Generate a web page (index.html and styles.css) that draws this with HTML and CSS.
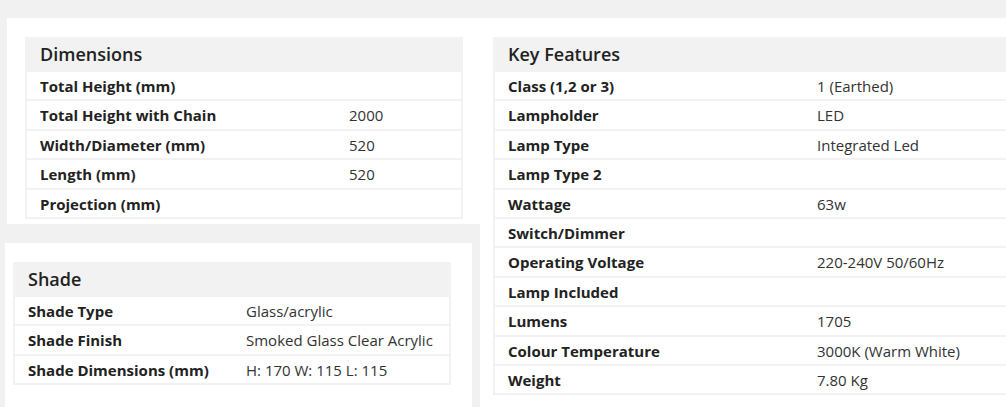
FILE: index.html
```html
<!DOCTYPE html>
<html>
<head>
<meta charset="utf-8">
<link rel="stylesheet" href="styles.css">
</head>
<body>
<div class="page">
  <div class="col-left">
    <section class="panel panel-dim">
      <div class="spec spec-dim">
        <div class="spec-title">Dimensions</div>
        <div class="row"><div class="k">Total Height (mm)</div><div class="v"></div></div>
        <div class="row"><div class="k">Total Height with Chain</div><div class="v">2000</div></div>
        <div class="row"><div class="k">Width/Diameter (mm)</div><div class="v">520</div></div>
        <div class="row"><div class="k">Length (mm)</div><div class="v">520</div></div>
        <div class="row"><div class="k">Projection (mm)</div><div class="v"></div></div>
      </div>
    </section>
    <section class="panel panel-shade">
      <div class="spec spec-shade">
        <div class="spec-title">Shade</div>
        <div class="row"><div class="k">Shade Type</div><div class="v">Glass/acrylic</div></div>
        <div class="row"><div class="k">Shade Finish</div><div class="v">Smoked Glass Clear Acrylic</div></div>
        <div class="row"><div class="k">Shade Dimensions (mm)</div><div class="v">H: 170 W: 115 L: 115</div></div>
      </div>
    </section>
  </div>
  <div class="col-right">
    <section class="panel panel-key">
      <div class="spec spec-key">
        <div class="spec-title">Key Features</div>
        <div class="row"><div class="k">Class (1,2 or 3)</div><div class="v">1 (Earthed)</div></div>
        <div class="row"><div class="k">Lampholder</div><div class="v">LED</div></div>
        <div class="row"><div class="k">Lamp Type</div><div class="v">Integrated Led</div></div>
        <div class="row"><div class="k">Lamp Type 2</div><div class="v"></div></div>
        <div class="row"><div class="k">Wattage</div><div class="v">63w</div></div>
        <div class="row"><div class="k">Switch/Dimmer</div><div class="v"></div></div>
        <div class="row"><div class="k">Operating Voltage</div><div class="v">220-240V 50/60Hz</div></div>
        <div class="row"><div class="k">Lamp Included</div><div class="v"></div></div>
        <div class="row"><div class="k">Lumens</div><div class="v">1705</div></div>
        <div class="row"><div class="k">Colour Temperature</div><div class="v">3000K (Warm White)</div></div>
        <div class="row"><div class="k">Weight</div><div class="v">7.80 Kg</div></div>
      </div>
    </section>
  </div>
</div>
</body>
</html>
```
FILE: styles.css
```css
html, body {
  margin: 0;
  padding: 0;
  background: #f1f1f1;
  overflow: hidden;
  height: 407px;
}
body {
  font-family: "Open Sans", "Liberation Sans", sans-serif;
  font-size: 15px;
  color: #222;
}
.page {
  display: flex;
  padding-top: 18px;
  width: 1006px;
  height: 389px;
  overflow: hidden;
}
.col-left {
  width: 480px;
  flex: none;
  display: flex;
  flex-direction: column;
}
.col-right {
  flex: 1;
  display: flex;
  min-width: 0;
  overflow: hidden;
}
.panel {
  background: #fff;
  box-sizing: border-box;
}
.panel-dim {
  margin-left: 7px;
  width: 473px;
  padding: 19px 17px 5px 18px;
}
.panel-shade {
  margin-left: 5px;
  margin-top: 19px;
  width: 467px;
  flex: 1;
  padding: 19px 21px 0 8px;
}
.panel-key {
  flex: none;
  width: 600px;
  padding: 19px 0 0 13px;
}
.spec {
  background: #f2f2f2;
  padding: 0 2px 2px;
  width: 438px;
  box-sizing: border-box;
}
.spec-key {
  width: 587px;
}
.spec-title {
  height: 35px;
  line-height: 35px;
  padding-left: 13px;
  font-size: 18px;
  font-weight: 600;
  color: #222;
}
.row {
  display: grid;
  grid-template-columns: 309px 1fr;
  background: #fff;
  height: 27.4px;
  line-height: 28.4px;
  margin-bottom: 2px;
}
.row:last-child {
  margin-bottom: 0;
}
.spec-shade .row {
  grid-template-columns: 218px 1fr;
}
.k {
  padding-left: 13px;
  font-weight: 700;
  color: #222;
  white-space: nowrap;
}
.v {
  padding-left: 13px;
  color: #333;
  white-space: nowrap;
}
```
